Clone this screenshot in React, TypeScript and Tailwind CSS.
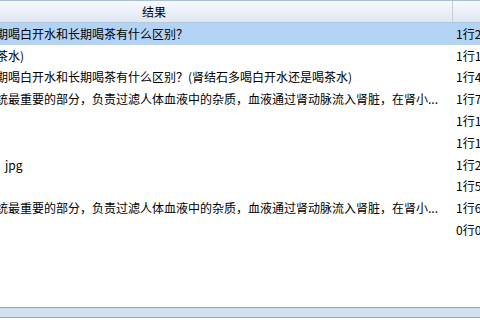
import React from "react";

const rows: { text: string; off: number; right: string; sel?: boolean }[] = [
  { text: "期喝白开水和长期喝茶有什么区别？", off: -4, right: "1行2", sel: true },
  { text: "茶水)", off: -4, right: "1行1" },
  { text: "期喝白开水和长期喝茶有什么区别？(肾结石多喝白开水还是喝茶水)", off: -4, right: "1行4" },
  { text: "统最重要的部分，负责过滤人体血液中的杂质，血液通过肾动脉流入肾脏，在肾小...", off: -4, right: "1行7" },
  { text: "", off: 0, right: "1行1" },
  { text: "", off: 0, right: "1行1" },
  { text: "jpg", off: 5, right: "1行2" },
  { text: "", off: 0, right: "1行5" },
  { text: "统最重要的部分，负责过滤人体血液中的杂质，血液通过肾动脉流入肾脏，在肾小...", off: -4, right: "1行6" },
  { text: "", off: 0, right: "0行0" },
];

export default function App() {
  return (
    <div
      className="w-[480px] h-[320px] bg-white flex flex-col overflow-hidden text-[12px] text-black"
      style={{ fontFamily: '"Noto Sans CJK SC", "Liberation Sans", sans-serif' }}
    >
      <div className="h-[23px] flex border-t border-[#a9bdd6] border-b border-b-[#b7c8dc] bg-gradient-to-b from-[#f7f9fc] to-[#dfe7f2] shrink-0">
        <div className="w-[453px] flex items-center justify-start pl-[142px] border-r border-[#c3cfdd]">结果</div>
        <div className="flex-1" />
      </div>
      <div className="flex-1 flex flex-col">
        {rows.map((r, i) => (
          <div
            key={i}
            className={`h-[21.8px] flex items-center whitespace-nowrap overflow-hidden ${r.sel ? "bg-[#b3d3f5]" : ""}`}
          >
            <div className="w-[453px] overflow-hidden">
              <span className="inline-block" style={{ marginLeft: r.off }}>{r.text}</span>
            </div>
            <div className="flex-1 pl-[3px] overflow-hidden">{r.right}</div>
          </div>
        ))}
      </div>
      <div className="h-[11px] mb-[2px] bg-[#d3e0ef] border-y border-[#8ea6c6] shrink-0" />
    </div>
  );
}
